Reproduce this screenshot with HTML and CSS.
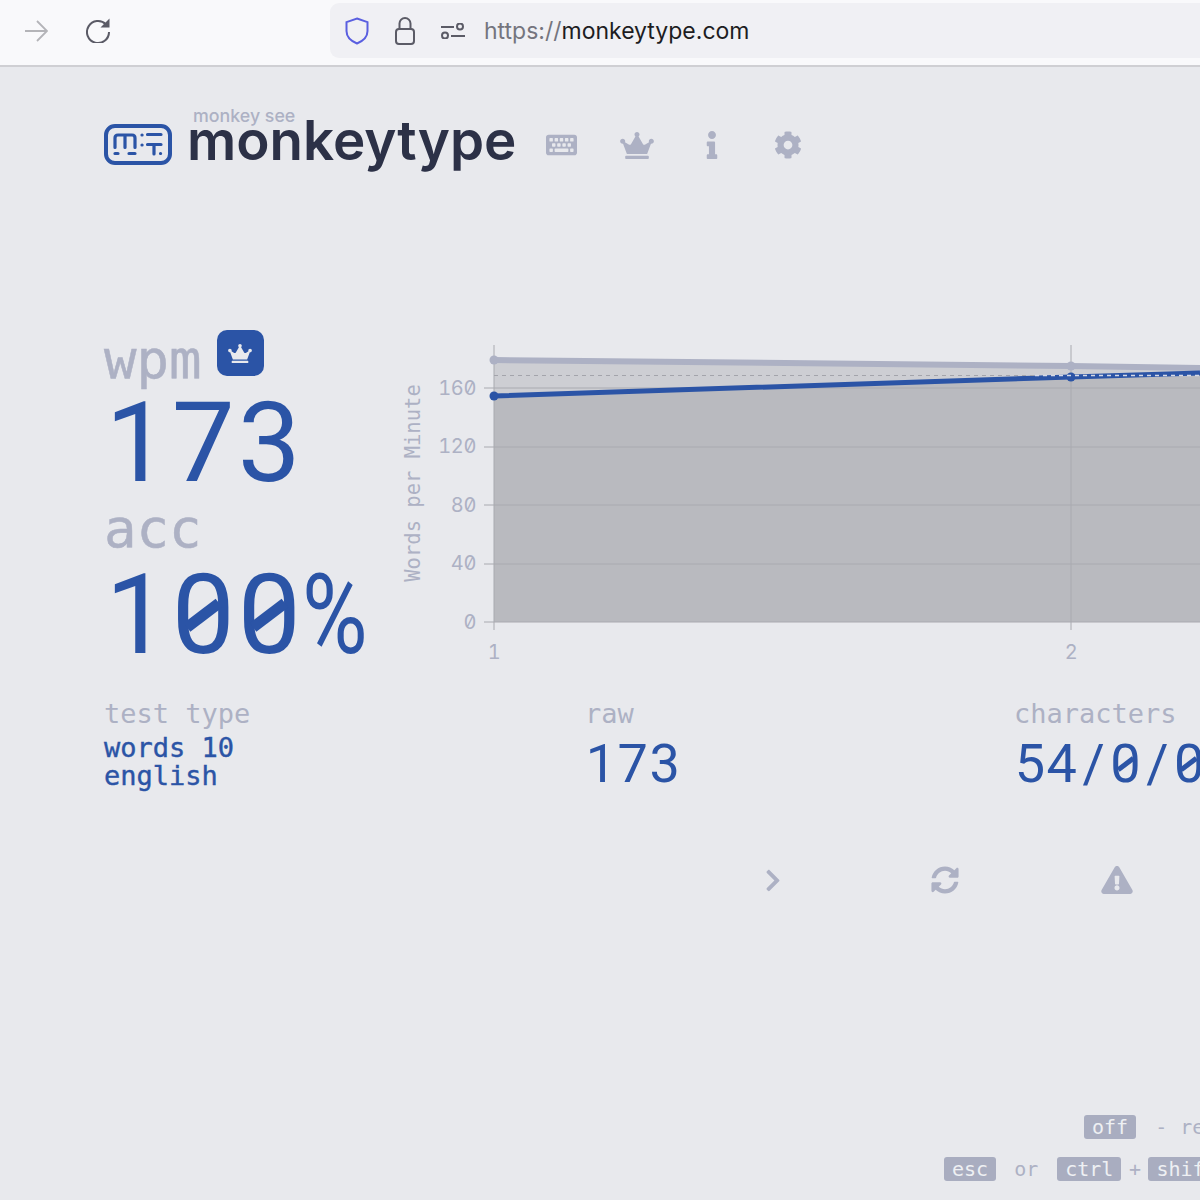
FILE: index.html
```html
<!DOCTYPE html>
<html lang="en">
<head>
    <meta charset="UTF-8">
    <title>monkeytype</title>
    <link rel="stylesheet" href="styles.css">
</head>
<body>

    <!-- Browser toolbar -->
    <div class="toolbar">
        <svg class="tool-arrow" viewBox="0 0 24 24"><path d="M1 12h22M13 2l10 10-10 10"/></svg>
        <svg class="tool-reload" viewBox="0 0 24 26"><path d="M20 7.5A11 11 0 1 0 23 15"/><path class="solid" d="M23.5 1.5v9h-9z"/></svg>
        <div class="url-bar">
            <svg class="url-shield" viewBox="0 0 24 28"><path d="M12 1.5l10.5 3.6v9c0 6-4.500 10-10.500 12.400C6 24.100 1.500 20.100 1.500 14.100v-9z"/></svg>
            <svg class="url-lock" viewBox="0 0 20 28"><path d="M4.500 12V6.500a5.500 5.500 0 0 1 11 0V12"/><rect x="1" y="12" width="18" height="15" rx="3"/></svg>
            <svg class="url-sliders" viewBox="0 0 24 16"><path d="M0 4h13M10 13h14"/><circle cx="19" cy="3.500" r="3"/><circle cx="4" cy="12.500" r="3"/></svg>
            <div class="url-text"><span class="url-scheme">https://</span>monkeytype.com</div>
        </div>
    </div>

    <div class="page">

        <!-- Header -->
        <div class="header">
            <svg class="logo" viewBox="0 0 68 41">
                <rect x="2" y="2" width="64" height="37" rx="9"/>
                <path d="M11 23.500v-9.500q0-3 3-3h14q3 0 3 3v9.500M21 11v12.500"/>
                <path d="M38 11h.1M38 21h.1M43.500 10.500h13.500M43.500 20.500h13.500M50 20.500v9.500M11 29.500h3M25 29.500h6M56.500 29.500h.1"/>
            </svg>
            <div class="brand">
                <div class="brand-top">monkey see</div>
                <div class="brand-name">monkeytype</div>
            </div>
            <div class="nav">
                <svg class="nav-keyboard" viewBox="0 0 576 512"><path d="M528 448H48c-26.510 0-48-21.490-48-48V112c0-26.510 21.490-48 48-48h480c26.510 0 48 21.490 48 48v288c0 26.510-21.490 48-48 48zM128 180v-40c0-6.627-5.373-12-12-12H76c-6.627 0-12 5.373-12 12v40c0 6.627 5.373 12 12 12h40c6.627 0 12-5.373 12-12zm96 0v-40c0-6.627-5.373-12-12-12h-40c-6.627 0-12 5.373-12 12v40c0 6.627 5.373 12 12 12h40c6.627 0 12-5.373 12-12zm96 0v-40c0-6.627-5.373-12-12-12h-40c-6.627 0-12 5.373-12 12v40c0 6.627 5.373 12 12 12h40c6.627 0 12-5.373 12-12zm96 0v-40c0-6.627-5.373-12-12-12h-40c-6.627 0-12 5.373-12 12v40c0 6.627 5.373 12 12 12h40c6.627 0 12-5.373 12-12zm96 0v-40c0-6.627-5.373-12-12-12h-40c-6.627 0-12 5.373-12 12v40c0 6.627 5.373 12 12 12h40c6.627 0 12-5.373 12-12zm-336 96v-40c0-6.627-5.373-12-12-12h-40c-6.627 0-12 5.373-12 12v40c0 6.627 5.373 12 12 12h40c6.627 0 12-5.373 12-12zm96 0v-40c0-6.627-5.373-12-12-12h-40c-6.627 0-12 5.373-12 12v40c0 6.627 5.373 12 12 12h40c6.627 0 12-5.373 12-12zm96 0v-40c0-6.627-5.373-12-12-12h-40c-6.627 0-12 5.373-12 12v40c0 6.627 5.373 12 12 12h40c6.627 0 12-5.373 12-12zm96 0v-40c0-6.627-5.373-12-12-12h-40c-6.627 0-12 5.373-12 12v40c0 6.627 5.373 12 12 12h40c6.627 0 12-5.373 12-12zm-336 96v-40c0-6.627-5.373-12-12-12H76c-6.627 0-12 5.373-12 12v40c0 6.627 5.373 12 12 12h40c6.627 0 12-5.373 12-12zm288 0v-40c0-6.627-5.373-12-12-12H172c-6.627 0-12 5.373-12 12v40c0 6.627 5.373 12 12 12h232c6.627 0 12-5.373 12-12zm96 0v-40c0-6.627-5.373-12-12-12h-40c-6.627 0-12 5.373-12 12v40c0 6.627 5.373 12 12 12h40c6.627 0 12-5.373 12-12z"/></svg>
                <svg class="nav-crown" viewBox="0 0 640 512"><path d="M528 448H112c-8.800 0-16 7.200-16 16v32c0 8.800 7.200 16 16 16h416c8.800 0 16-7.200 16-16v-32c0-8.800-7.200-16-16-16zm64-320c-26.500 0-48 21.500-48 48 0 7.100 1.600 13.700 4.400 19.800L476 239.200c-15.400 9.200-35.300 4-44.200-11.600L350.300 85C361 76.200 368 63 368 48c0-26.500-21.500-48-48-48s-48 21.500-48 48c0 15 7 28.200 17.700 37l-81.500 142.600c-8.900 15.600-28.900 20.800-44.200 11.600l-72.300-43.400c2.700-6 4.400-12.700 4.400-19.800 0-26.500-21.500-48-48-48S0 149.500 0 176s21.500 48 48 48c2.600 0 5.200-.4 7.700-.8L128 416h384l72.300-192.800c2.500.4 5.100.8 7.700.8 26.500 0 48-21.500 48-48s-21.500-48-48-48z"/></svg>
                <svg class="nav-info" viewBox="0 0 192 512"><path d="M20 424.229h20V279.771H20c-11.046 0-20-8.954-20-20V212c0-11.046 8.954-20 20-20h112c11.046 0 20 8.954 20 20v212.229h20c11.046 0 20 8.954 20 20V492c0 11.046-8.954 20-20 20H20c-11.046 0-20-8.954-20-20v-47.771c0-11.046 8.954-20 20-20zM96 0C56.235 0 24 32.235 24 72s32.235 72 72 72 72-32.235 72-72S135.764 0 96 0z"/></svg>
                <svg class="nav-gear" viewBox="0 0 512 512"><path d="M487.400 315.700l-42.600-24.600c4.300-23.200 4.300-47 0-70.200l42.600-24.600c4.900-2.800 7.100-8.600 5.500-14-11.100-35.600-30-67.800-54.700-94.600-3.800-4.100-10-5.100-14.800-2.300L380.800 110c-17.900-15.400-38.500-27.300-60.800-35.100V25.800c0-5.600-3.900-10.500-9.400-11.700-36.700-8.200-74.300-7.800-109.200 0-5.500 1.200-9.400 6.100-9.400 11.700V75c-22.200 7.900-42.800 19.800-60.800 35.100L88.700 85.500c-4.900-2.800-11-1.900-14.800 2.300-24.700 26.700-43.600 58.900-54.700 94.600-1.700 5.400.6 11.200 5.500 14L67.300 221c-4.300 23.200-4.300 47 0 70.200l-42.600 24.600c-4.900 2.800-7.100 8.600-5.500 14 11.100 35.600 30 67.800 54.700 94.600 3.800 4.100 10 5.100 14.800 2.300l42.600-24.600c17.900 15.400 38.500 27.300 60.800 35.100v49.200c0 5.600 3.900 10.500 9.400 11.700 36.700 8.200 74.300 7.800 109.200 0 5.500-1.200 9.400-6.100 9.400-11.700v-49.200c22.200-7.900 42.800-19.800 60.800-35.100l42.600 24.600c4.900 2.800 11 1.900 14.800-2.300 24.700-26.700 43.600-58.900 54.700-94.600 1.500-5.500-.7-11.300-5.600-14.100zM256 336c-44.100 0-80-35.900-80-80s35.900-80 80-80 80 35.900 80 80-35.900 80-80 80z"/></svg>
            </div>
        </div>

        <!-- Result -->
        <div class="result">
            <div class="big-stats">
                <div class="wpm-label">
                    <span class="big-label">wpm</span>
                    <div class="badge">
                        <svg viewBox="0 0 640 512"><path d="M528 448H112c-8.800 0-16 7.200-16 16v32c0 8.800 7.200 16 16 16h416c8.800 0 16-7.200 16-16v-32c0-8.800-7.200-16-16-16zm64-320c-26.500 0-48 21.500-48 48 0 7.100 1.600 13.700 4.400 19.800L476 239.200c-15.400 9.200-35.300 4-44.200-11.600L350.300 85C361 76.200 368 63 368 48c0-26.500-21.500-48-48-48s-48 21.500-48 48c0 15 7 28.200 17.700 37l-81.500 142.600c-8.900 15.600-28.900 20.800-44.200 11.600l-72.300-43.400c2.700-6 4.400-12.700 4.400-19.800 0-26.500-21.500-48-48-48S0 149.500 0 176s21.500 48 48 48c2.600 0 5.200-.4 7.700-.8L128 416h384l72.300-192.800c2.500.4 5.100.8 7.700.8 26.500 0 48-21.500 48-48s-21.500-48-48-48z"/></svg>
                    </div>
                </div>
                <div class="big-value"><span class="ch">1</span><span class="ch">7</span><span class="ch">3</span></div>
                <div class="big-label">acc</div>
                <div class="big-value"><span class="ch">1</span><span class="ch zero">0</span><span class="ch zero">0</span><span class="ch pct">%</span></div>
            </div>

            <svg class="chart" viewBox="400 340 800 320">
                <path class="area-raw" d="M494 360L1071 366L1200 368V622H494z"/>
                <path class="area-wpm" d="M494 396L1071 377L1200 373V622H494z"/>
                <path class="grid" d="M484 388H1200M484 447H1200M484 505H1200M484 564H1200M484 622H1200"/>
                <path class="grid" d="M494 345V630M1071 345V630"/>
                <path class="line-raw" d="M494 360L1071 366L1200 368"/>
                <circle class="dot-raw" cx="494" cy="360" r="4.500"/>
                <circle class="dot-raw" cx="1071" cy="366" r="4.500"/>
                <path class="line-wpm" d="M494 396L1071 377L1200 373"/>
                <circle class="dot-wpm" cx="494" cy="396" r="4.500"/>
                <circle class="dot-wpm" cx="1071" cy="377" r="4.500"/>
                <path class="line-avg" d="M494 375.500H1035"/>
                <path class="line-avg-over" d="M1035 375.500H1200"/>
                <g class="tick-y">
                    <text x="476" y="395">160</text>
                    <text x="476" y="453">120</text>
                    <text x="476" y="512">80</text>
                    <text x="476" y="570">40</text>
                    <text x="476" y="629">0</text>
                </g>
                <g class="tick-x">
                    <text x="494" y="659">1</text>
                    <text x="1071" y="659">2</text>
                </g>
                <text class="axis-title" transform="translate(420 483) rotate(-90)">Words per Minute</text>
            </svg>
        </div>

        <!-- Small stats -->
        <div class="more-stats">
            <div class="stat stat-type">
                <div class="stat-label">test type</div>
                <div class="stat-text">words 10<br>english</div>
            </div>
            <div class="stat stat-raw">
                <div class="stat-label">raw</div>
                <div class="stat-value"><span class="ch">1</span><span class="ch">7</span><span class="ch">3</span></div>
            </div>
            <div class="stat">
                <div class="stat-label">characters</div>
                <div class="stat-value"><span class="ch">5</span><span class="ch">4</span><span class="ch">/</span><span class="ch zero">0</span><span class="ch">/</span><span class="ch zero">0</span><span class="ch">/</span><span class="ch zero">0</span></div>
            </div>
        </div>

        <!-- Result buttons -->
        <div class="buttons">
            <svg class="btn-next" viewBox="0 0 320 512"><path d="M285.476 272.971L91.132 467.314c-9.373 9.373-24.569 9.373-33.941 0l-22.667-22.667c-9.357-9.357-9.375-24.522-.04-33.901L188.505 256 34.484 101.255c-9.335-9.379-9.317-24.544.04-33.901l22.667-22.667c9.373-9.373 24.569-9.373 33.941 0L285.475 239.030c9.373 9.372 9.373 24.568.001 33.941z"/></svg>
            <svg class="btn-sync" viewBox="0 0 512 512"><path d="M370.720 133.280C339.458 104.008 298.888 87.962 255.848 88c-77.458.068-144.328 53.178-162.791 126.850-1.344 5.363-6.122 9.150-11.651 9.150H24.103c-7.498 0-13.194-6.807-11.807-14.176C33.933 94.924 134.813 8 256 8c66.448 0 126.791 26.136 171.315 68.685L463.030 40.970C478.149 25.851 504 36.559 504 57.941V192c0 13.255-10.745 24-24 24H345.941c-21.382 0-32.090-25.851-16.971-40.971l41.750-41.749zM32 296h134.059c21.382 0 32.090 25.851 16.971 40.971l-41.750 41.750c31.262 29.273 71.835 45.319 114.876 45.280 77.418-.07 144.315-53.144 162.787-126.849 1.344-5.363 6.122-9.150 11.651-9.150h57.304c7.498 0 13.194 6.807 11.807 14.176C478.067 417.076 377.187 504 256 504c-66.448 0-126.791-26.136-171.315-68.685L48.970 471.030C33.851 486.149 8 475.441 8 454.059V320c0-13.255 10.745-24 24-24z"/></svg>
            <svg class="btn-warn" viewBox="0 0 576 512"><path d="M569.517 440.013C587.975 472.007 564.806 512 527.940 512H48.054c-36.937 0-59.999-40.055-41.577-71.987L246.423 24.035c18.467-32.009 64.720-31.951 83.154 0l239.940 416.028zM288 354c-25.405 0-46 20.595-46 46s20.595 46 46 46 46-20.595 46-46-20.595-46-46-46zm-43.673-165.346l7.418 136c.347 6.364 5.609 11.346 11.982 11.346h48.546c6.373 0 11.635-4.982 11.982-11.346l7.418-136c.375-6.874-5.098-12.654-11.982-12.654h-63.383c-6.884 0-12.356 5.780-11.981 12.654z"/></svg>
        </div>

        <!-- Key hints -->
        <div class="hints">
            <div class="hint-row hint-restart"><kbd>off</kbd><span class="hint-gap">-</span><span>restart test</span></div>
            <div class="hint-row hint-command"><kbd>esc</kbd><span class="hint-or">or</span><kbd>ctrl</kbd><span class="hint-plus">+</span><kbd>shift</kbd></div>
        </div>
    </div>

</body>
</html>
```

FILE: styles.css
```css
html, body {
    margin: 0;
    padding: 0;
    height: 1200px;
    overflow: hidden;
}
body {
    background-color: #e8e9ed;
    font-family: "DejaVu Sans Mono", monospace;
    color: #adb1c4;
}
svg {
    display: block;
    flex: none;
}

/* toolbar */
.toolbar {
    height: 65px;
    box-sizing: border-box;
    display: flex;
    align-items: flex-start;
    background-color: #f9f9fb;
    padding: 3px 0 0 24px;
}
.toolbar + .page {
    border-top: 2px solid #cfcfd3;
}
.tool-arrow {
    width: 24px;
    height: 24px;
    margin-top: 16px;
    fill: none;
    stroke: #b4b4b8;
    stroke-width: 1.800;
}
.tool-reload {
    width: 24px;
    height: 26px;
    margin: 14px 0 0 38px;
    fill: none;
    stroke: #5b5b66;
    stroke-width: 2;
}
.tool-reload .solid {
    fill: #5b5b66;
    stroke: none;
}
.url-bar {
    flex: 1;
    height: 55px;
    margin-left: 220px;
    display: flex;
    align-items: center;
    background-color: #f0f0f4;
    border-radius: 9px 0 0 9px;
    padding-left: 15px;
}
.url-shield {
    width: 24px;
    height: 28px;
    fill: none;
    stroke: #5a5fe0;
    stroke-width: 2;
}
.url-lock {
    width: 20px;
    height: 28px;
    margin-left: 26px;
    fill: none;
    stroke: #5b5b66;
    stroke-width: 2;
}
.url-sliders {
    width: 24px;
    height: 16px;
    margin-left: 26px;
    fill: none;
    stroke: #5b5b66;
    stroke-width: 2;
}
.url-text {
    margin-left: 19px;
    font-family: Inter, sans-serif;
    font-size: 23px;
    color: #1d1d22;
    white-space: nowrap;
}
.url-scheme {
    color: #75757e;
}

/* header */
.page {
    padding-left: 104px;
    white-space: nowrap;
}
.header {
    display: flex;
    align-items: flex-start;
    padding-top: 40px;
    height: 84px;
}
.logo {
    width: 68px;
    height: 41px;
    margin-top: 17px;
    fill: none;
    stroke: #2b54a6;
    stroke-width: 4;
    stroke-linecap: round;
}
.logo path {
    stroke-width: 3.200;
}
.brand {
    margin-left: 15px;
}
.brand-top {
    margin-left: 6px;
    font-family: Inter, sans-serif;
    font-size: 17.800px;
    line-height: 18px;
    height: 7px;
    font-weight: 500;
}
.brand-name {
    font-family: Inter, sans-serif;
    font-size: 54.700px;
    line-height: 52px;
    font-weight: 600;
    color: #2c3147;
}
.nav {
    display: flex;
    align-items: center;
    height: 28px;
    margin: 24px 0 0 30px;
    fill: #adb1c4;
}
.nav-keyboard {
    width: 31px;
    height: 28px;
}
.nav-crown {
    width: 34px;
    height: 27px;
    margin-left: 43px;
}
.nav-info {
    width: 12px;
    height: 28px;
    margin-left: 52px;
}
.nav-gear {
    width: 28px;
    height: 28px;
    margin-left: 56px;
}

/* result */
.result {
    display: flex;
    height: 367px;
    margin-top: 139px;
}
.big-stats {
    width: 296px;
    flex: none;
}
.big-label {
    font-size: 54px;
    line-height: 60px;
    -webkit-text-stroke: .5px #adb1c4;
}
.wpm-label {
    display: flex;
    align-items: flex-start;
    height: 57px;
}
.badge {
    width: 47px;
    height: 46px;
    margin-left: 15px;
    display: flex;
    align-items: center;
    justify-content: center;
    background-color: #2b54a6;
    border-radius: 10px;
    fill: #e8e9ed;
}
.badge svg {
    width: 24px;
    height: 19px;
}

/* numbers: Roboto digits held to a mono cell, zeros get their slash */
.ch {
    display: inline-block;
    position: relative;
    width: .59em;
    text-align: center;
}
.zero::after {
    content: "";
    position: absolute;
    left: 50%;
    top: 50%;
    width: .36em;
    height: .095em;
    background-color: currentColor;
    transform: translate(-50%, -50%) rotate(-37deg);
}
.pct {
    text-align: left;
    transform: scaleX(.8);
    transform-origin: left;
}
.big-value {
    font-family: Roboto, sans-serif;
    font-size: 112px;
    line-height: 112px;
    color: #2b54a6;
}
.chart {
    width: 800px;
    height: 320px;
    margin-top: 10px;
}
.area-raw {
    fill: #cdced3;
}
.area-wpm {
    fill: #b9babf;
}
.grid {
    fill: none;
    stroke: #a9aab0;
    stroke-width: 1;
}
.line-raw {
    fill: none;
    stroke: #adb1c4;
    stroke-width: 6;
}
.line-wpm {
    fill: none;
    stroke: #2b54a6;
    stroke-width: 5;
}
.line-avg {
    fill: none;
    stroke: #a3a4ab;
    stroke-width: 1;
    stroke-dasharray: 4 4;
}
.line-avg-over {
    fill: none;
    stroke: #d6d9e6;
    stroke-width: 1.500;
    stroke-dasharray: 4 4;
}
.dot-raw {
    fill: #adb1c4;
}
.dot-wpm {
    fill: #2b54a6;
}
.chart text {
    font-family: "DejaVu Sans Mono", monospace;
    fill: #adb1c4;
    font-size: 20px;
}
.chart .tick-y text,
.chart .tick-x text {
    font-family: Inter, sans-serif;
    font-feature-settings: "tnum", "zero";
    letter-spacing: -.4px;
}
.tick-y text {
    text-anchor: end;
}
.tick-x text {
    text-anchor: middle;
}
.chart .axis-title {
    text-anchor: middle;
    font-size: 20.500px;
}

/* small stats */
.more-stats {
    display: flex;
}
.stat {
    flex: none;
}
.stat-type {
    width: 481px;
}
.stat-raw {
    width: 429px;
}
.stat-label {
    font-size: 27px;
    line-height: 34px;
}
.stat-text {
    margin-top: 3px;
    font-size: 27px;
    line-height: 28px;
    color: #2b54a6;
    -webkit-text-stroke: .4px #2b54a6;
}
.stat-value {
    margin-top: 2px;
    font-family: Roboto, sans-serif;
    font-size: 54px;
    line-height: 62px;
    color: #2b54a6;
}

/* buttons */
.buttons {
    display: flex;
    align-items: center;
    height: 28px;
    margin: 71px 0 0 661px;
    fill: #adb1c4;
}
.btn-next {
    width: 16px;
    height: 25px;
}
.btn-sync {
    width: 28px;
    height: 28px;
    margin-left: 150px;
}
.btn-warn {
    width: 32px;
    height: 28px;
    margin-left: 142px;
}

/* key hints */
.hints {
    margin-top: 221px;
    font-size: 20px;
}
.hint-row {
    display: flex;
    align-items: center;
    height: 24px;
}
.hint-restart {
    padding-left: 980px;
}
.hint-command {
    margin-top: 18px;
    padding-left: 840px;
}
kbd {
    font-family: "DejaVu Sans Mono", monospace;
    background-color: #a9adc0;
    color: #eef0f3;
    border-radius: 3px;
    padding: 0 8px;
    line-height: 24px;
}
.hint-gap {
    margin: 0 13px 0 19px;
}
.hint-or {
    margin: 0 19px 0 18px;
}
.hint-plus {
    margin: 0 7.500px;
}
```
